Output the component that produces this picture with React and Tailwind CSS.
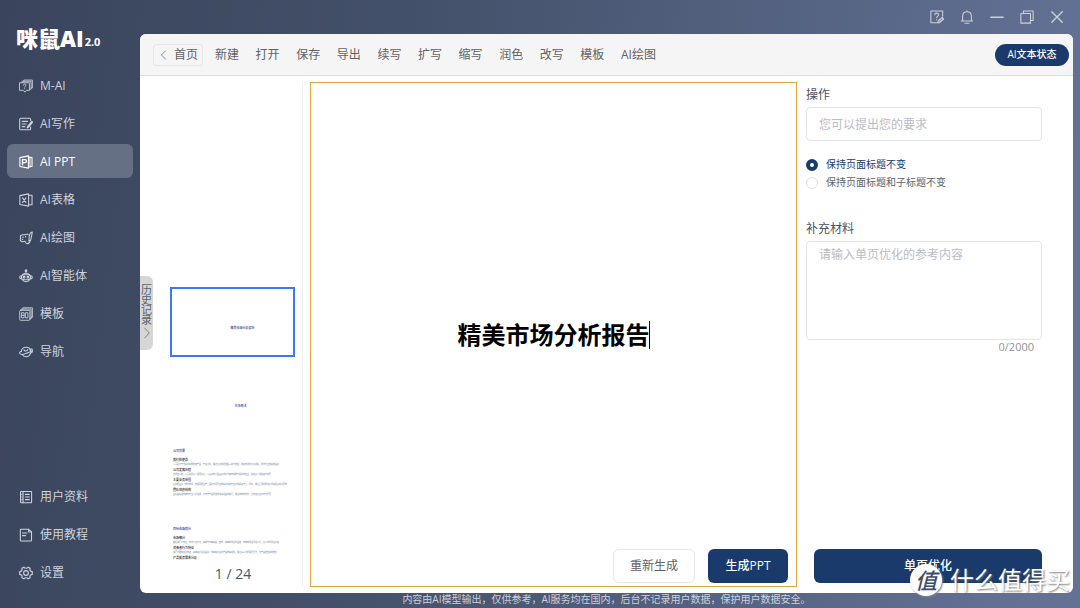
import React from "react";

function Icon({ children, className = "size-4", width = 1 }) {
  return (
    <svg
      viewBox="0 0 16 16"
      className={`shrink-0 ${className}`}
      fill="none"
      stroke="currentColor"
      strokeWidth={width}
      strokeLinecap="round"
      strokeLinejoin="round"
      aria-hidden="true"
    >
      {children}
    </svg>
  );
}

const nav = "size-3.5";

const icons = {
  chat: (
    <Icon className={nav}>
      <path d="M3.500 4V2.600h10.300v9h-1.700" />
      <path d="M5.500 2.600V1.200h9.800v9h-1.500" />
      <path d="M1 4.300h10.900v8.700H8.400l-1.600 2-1.600-2H1z" />
      <path d="M5 7.200c0-2 3-2 3 0 0 1-1.500 1-1.500 2.200M6.500 11v.2" />
    </Icon>
  ),
  write: (
    <Icon className={nav} width={1.200}>
      <path d="M13.300 4V2.800c0-.8-.5-1.300-1.300-1.300H2.200C1.400 1.500.8 2 .8 2.800v10.500c0 .8.600 1.300 1.400 1.300H12c.8 0 1.300-.5 1.300-1.300V11.500" />
      <path d="M3.600 5h6.200M3.600 8h4.600M3.600 11h3.200" />
      <path d="M14.600 5 9.900 10.800l-.6 1.700 1.700-.9 4.600-5.800z" fill="currentColor" />
    </Icon>
  ),
  ppt: (
    <Icon className={nav} width={1.200}>
      <path d="M1 3 10.800 1v14L1 13.100z" />
      <path d="M10.800 2.200h1.700v11.600h-1.700M12.500 2.800h2.400v10.400h-2.400" />
      <path d="M4 11.200V5.300h2.800c2.400 0 2.400 3.400 0 3.400H4" strokeWidth="1.500" />
    </Icon>
  ),
  sheet: (
    <Icon className={nav} width={1.200}>
      <path d="M1 3 11 1v14L1 13.100z" />
      <path d="M11 2.600h3.900v10.800H11" />
      <path d="m4 5.500 4 5.200M8 5.500l-4 5.200" />
    </Icon>
  ),
  paint: (
    <Icon className={nav} width={1.200}>
      <path d="M10.700 4.300C9.500 2.800 7.500 4.100 6 4.400c-2-.6-4.500.4-4.500 2 0 .9.600 1.200.4 2-1 1-.6 3.600 1.900 3.800 1.700.2 1.900-.7 3-.5.900.3.500 2.900 2.700 2.800 2-.2 3-2 3.300-3.800" />
      <path d="M15.200 1.200c-2 .5-3.300 2.600-3.500 5.400l-.4 4.800c1.600-.2 2.400-1.400 2.500-2.900z" />
      <path d="M4.500 7.200h.1M7.500 6.500h.1M4 9.700h.1" strokeWidth="1.600" />
    </Icon>
  ),
  robot: (
    <Icon className={nav} width={1.200}>
      <circle cx="8" cy="2" r="1" />
      <path d="M8 3.200v1.600M4 6.500c.8-1.200 2.300-1.700 4-1.700s3.200.5 4 1.700" />
      <rect x="2.800" y="6.600" width="10.400" height="5.600" rx="2.800" />
      <path d="M2.600 7.700c-2.400 0-2.400 3.600 0 3.600M13.400 7.700c2.400 0 2.400 3.600 0 3.600M3.800 12.400c1.700 2.800 6.700 2.800 8.400 0" />
      <circle cx="5.800" cy="9.400" r="1" />
      <circle cx="10.200" cy="9.400" r="1" />
    </Icon>
  ),
  template: (
    <Icon className={nav}>
      <rect x=".8" y="3.800" width="11.600" height="11.400" rx="1" />
      <path d="M2.600 3.800V2.400h11.200v11.200h-1.400M4.400 2.400V.9h10.900v11h-1.500" />
      <path d="M3.200 6.600h2.600v5.800H3.200zM3.200 9.500h2.600M7.700 6.600h2.500v5.800H7.700z" />
    </Icon>
  ),
  compass: (
    <Icon className={nav} width={1.200}>
      <path d="M2.800 7.300C2.900 4.700 5.200 2.600 8 2.600s5 1.900 5.200 4.400M13.100 9.300c-.6 2.500-2.700 4.100-5.100 4.100-1.900 0-3.500-.9-4.400-2.500" />
      <path d="M2.800 7C1.200 7.600.4 8.500.8 9.500c1.100 1.900 5.300 1.200 8.700-.3 3.500-1.500 6.500-2.500 5.700-4-.4-.6-1.400-.6-2.600-.3M13.100 9.300c1.800-.6 2.600-1.500 2.100-2.400" />
      <path d="M5.700 5.500c.3 1.900 3.700 2 4.300-.2" />
    </Icon>
  ),
  profile: (
    <Icon className={nav} width={1.200}>
      <rect x="1.800" y="1.600" width="12.600" height="13" rx=".5" />
      <path d="M4.600 1.600v13M7.300 5h4.400M7.300 8h4.400M7.300 11h4.400" />
      <path d="M2 5h2M2 8h2M2 11h2" opacity=".6" />
    </Icon>
  ),
  guide: (
    <Icon className={nav} width={1.200}>
      <path d="M11 1.500H2.300c-.5 0-.8.300-.8.800v11.700c0 .5.300.8.800.8h11.200c.5 0 .8-.3.800-.8V4.500z" />
      <path d="M11 1.500v3h3.300M4 5.700h5M4 8.700h3.500" />
    </Icon>
  ),
  gear: (
    <Icon className={nav} width={1.300}>
      <path d="M5.600 1.300c.7 1 1.500 1.300 2.400 1.300s1.700-.3 2.400-1.300l2.300 1.300c-.4 1.200-.4 2 .1 2.700s1.100 1.100 2.400 1.200v3c-1.300.1-1.900.5-2.400 1.200s-.5 1.500-.1 2.700l-2.300 1.300c-.7-1-1.500-1.300-2.400-1.300s-1.700.3-2.400 1.300l-2.300-1.300c.4-1.200.4-2-.1-2.700S2.100 9.600.8 9.500v-3c1.300-.1 1.900-.5 2.400-1.200s.5-1.500.1-2.700z" />
      <circle cx="8" cy="8" r="2.700" />
    </Icon>
  ),
};

const mainNav = [
  ["M-AI", "chat"],
  ["AI写作", "write"],
  ["AI PPT", "ppt"],
  ["AI表格", "sheet"],
  ["AI绘图", "paint"],
  ["AI智能体", "robot"],
  ["模板", "template"],
  ["导航", "compass"],
];

const footNav = [
  ["用户资料", "profile"],
  ["使用教程", "guide"],
  ["设置", "gear"],
];

const tools = ["新建", "打开", "保存", "导出", "续写", "扩写", "缩写", "润色", "改写", "模板", "AI绘图"];

const slides = [
  {
    title: "公司背景",
    items: [
      ["我们的使命", "公司致力于为客户提供优质产品，专注创新，通过持续的研发投入提升体验，并在市场中保持领先，成为行业信赖的品牌"],
      ["公司发展历程", "自成立以来，公司经历多个发展阶段，从最初的小型团队成长为拥有完整产品线的企业，并在多个领域取得成果"],
      ["主要业务范围", "业务覆盖多个细分市场，包括研发生产，面向不同行业的客户提供专业化的解决方案，同时，通过灵活的服务模式满足多样化需求"],
      ["团队组织结构", "团队由经验丰富的专业人员组成，分布于产品研发市场和运营等部门，通过高效的协作，保障各项业务有序开展"],
    ],
  },
  {
    title: "目标市场划分",
    items: [
      ["市场细分", "根据消费者特征，市场可划分为，高端与中端两类，其中，高端市场注重品质，中端市场注重性价比，大众市场关注价格"],
      ["消费者行为特征", "消费者更加注重体验，高端用户关注品牌，中端用户注重产品的实用性，通过深入分析消费行为，为产品定位提供支持"],
      ["产品服务需求分析", ""],
    ],
  },
];

function NavItem({ label, icon, active }) {
  return (
    <button
      type="button"
      className={`flex h-[34px] w-full items-center gap-[7px] rounded-md pl-3 pt-px text-xs ${
        active ? "bg-[#667084] text-white" : "text-[#ced3dd]"
      }`}
    >
      {icons[icon]}
      <span>{label}</span>
    </button>
  );
}

function Sidebar() {
  return (
    <aside className="flex w-[140px] shrink-0 flex-col px-[7px] pb-[19px] pt-6">
      <div className="flex h-11 items-start pl-[9px] leading-7 text-white">
        <span className="text-[22px] font-black">咪鼠AI</span>
        <span className="pl-px pt-1 text-[11px] font-bold">2.0</span>
      </div>
      <nav className="flex flex-1 flex-col gap-1">
        {mainNav.map(([label, icon]) => (
          <NavItem key={label} label={label} icon={icon} active={label === "AI PPT"} />
        ))}
      </nav>
      <nav className="flex flex-col gap-1">
        {footNav.map(([label, icon]) => (
          <NavItem key={label} label={label} icon={icon} />
        ))}
      </nav>
    </aside>
  );
}

function TitleBar() {
  return (
    <header className="flex h-[34px] shrink-0 items-center justify-end gap-4 pr-[9px] text-[#cfd1d6]">
      <button type="button" aria-label="反馈">
        <Icon className={nav} width={1.200}>
          <path d="M14.500 7V1.200H1v13.300h6.500" />
          <path d="M5.500 5.300c.1-2.300 4.300-2.300 4.300.1 0 1.500-2.100 1.700-2.100 3.400M7.700 11v.2" />
          <path d="m9.300 12.500 4.600-4 1.800 1.800-4.700 4.200-2.200.4z" fill="currentColor" fillOpacity=".5" />
        </Icon>
      </button>
      <button type="button" aria-label="通知">
        <Icon className={nav} width={1.200}>
          <path d="M1.500 12.500h13M3 12.500V7.300c0-3 2-5.200 5-5.200s5 2.200 5 5.200v5.200M8 .8v1.300M5.700 15.200h4.600" />
        </Icon>
      </button>
      <button type="button" aria-label="最小化">
        <Icon className={nav} width={1.600}>
          <path d="M1 8.300h14" />
        </Icon>
      </button>
      <button type="button" aria-label="还原">
        <Icon className={nav} width={1.200}>
          <rect x="1" y="4" width="11" height="11" />
          <path d="M4 4V1.200h11V12h-3" />
        </Icon>
      </button>
      <button type="button" aria-label="关闭">
        <Icon className={nav} width={1.600}>
          <path d="M2 2l12 12M14 2 2 14" />
        </Icon>
      </button>
    </header>
  );
}

function Toolbar() {
  return (
    <div className="flex h-[42px] shrink-0 items-center border-b border-[#dedede] bg-[#f5f5f5] pl-[13px] pr-1 text-xs text-[#606266]">
      <button type="button" className="flex h-[22px] items-center gap-1 rounded-[3px] border border-[#e6e6e6] pl-1 pr-1">
        <Icon className="size-3">
          <path d="M10 2.500 4.500 8l5.500 5.500" />
        </Icon>
        首页
      </button>
      <div className="ml-3 flex w-[441px] justify-between">
        {tools.map((t) => (
          <button key={t} type="button">
            {t}
          </button>
        ))}
      </div>
      <button type="button" className="ml-auto h-[22px] w-[74px] rounded-full bg-[#1a3a6b] text-[10px] font-medium text-white">
        AI文本状态
      </button>
    </div>
  );
}

const slideBox = "h-[70px] shrink-0 overflow-hidden";

function SlideList() {
  return (
    <section className="relative mr-[7px] flex w-[163px] shrink-0 flex-col border-r border-[#f0f0f0]">
      <div className="flex min-h-0 flex-1 flex-col gap-2 overflow-hidden pl-[30px] pr-[7px] pt-[205px]">
        <div className={`${slideBox} flex items-center justify-center border-2 border-[#3b78f5] pl-5 pt-3`}>
          <span className="text-[3px] font-medium leading-[4px] text-[#26336b]">精美市场分析报告</span>
        </div>
        <div className={`${slideBox} flex items-center justify-center pl-4 pt-3`}>
          <span className="text-[3px] leading-[4px] text-[#1c2f96]">市场概述</span>
        </div>
        {slides.map((s) => (
          <div key={s.title} className={`${slideBox} pl-[3px] pt-1.5`}>
            <p className="text-[3px] font-medium leading-[4px] text-[#1c2f96]">{s.title}</p>
            <div className="pt-[5px]">
              {s.items.map(([h, body]) => (
                <div key={h} className="whitespace-nowrap pb-px leading-[5px]">
                  <p className="text-[3px] font-medium text-[#222]">{h}</p>
                  <p className="text-[2px] leading-[4px] text-[#777]">{body}</p>
                </div>
              ))}
            </div>
          </div>
        ))}
      </div>
      <p className="shrink-0 pb-[3px] pl-6 pt-0.5 text-center text-sm text-[#4b5563]">1 / 24</p>
      <button
        type="button"
        className="absolute left-0 top-[194px] flex h-[74px] w-[13px] flex-col items-center rounded-r-md bg-[#d6d6d6] pt-[9px] text-[#5d646f]"
      >
        <span className="w-[11px] break-all text-[11px] leading-[10px]">历史记录</span>
        <Icon className="mt-0.5 size-3">
          <path d="m5 1.500 6 6.500-6 6.500" />
        </Icon>
      </button>
    </section>
  );
}

function Editor() {
  return (
    <section className="grid min-w-0 flex-1 grid-rows-[1fr_auto_1fr] border border-[#e2a53a]">
      <div />
      <h1 className="flex items-center justify-center text-2xl font-bold leading-8 text-black">
        精美市场分析报告
        <span className="-ml-px h-7 w-px bg-black" />
      </h1>
      <div className="flex items-end justify-end gap-[13px] pb-[3px] pr-2 text-xs">
        <button type="button" className="h-[34px] w-[82px] rounded-md border border-[#e4e6ee] text-[#606266]">
          重新生成
        </button>
        <button type="button" className="h-[34px] w-20 rounded-md bg-[#1a3a6b] font-medium text-white">
          生成PPT
        </button>
      </div>
    </section>
  );
}

function Radio({ id, label, on }) {
  return (
    <div className="flex h-[18px] items-center gap-2">
      <input
        id={id}
        type="radio"
        name="keep"
        defaultChecked={on}
        className="size-3 appearance-none rounded-full border border-[#dcdfe6] bg-white checked:border-4 checked:border-[#1a3a6b]"
      />
      <label htmlFor={id} className={`text-[10px] ${on ? "text-[#1a3a6b]" : "text-[#606266]"}`}>
        {label}
      </label>
    </div>
  );
}

function OptionsPanel() {
  return (
    <section className="flex w-[276px] shrink-0 flex-col pb-1 pl-[9px] pr-[31px] text-xs text-[#4a5260]">
      <label htmlFor="request" className="pb-1 pt-[5px]">
        操作
      </label>
      <input
        id="request"
        type="text"
        placeholder="您可以提出您的要求"
        className="h-[34px] w-full rounded border border-[#e2e4ec] px-3 outline-none placeholder:text-[#b8bcc5]"
      />
      <div className="pt-[15px]">
        <Radio id="keep-title" label="保持页面标题不变" on />
        <Radio id="keep-both" label="保持页面标题和子标题不变" />
      </div>
      <label htmlFor="material" className="pb-1 pt-[29px]">
        补充材料
      </label>
      <textarea
        id="material"
        placeholder="请输入单页优化的参考内容"
        className="block h-[99px] w-full resize-none rounded border border-[#e2e4ec] px-3 py-[5px] outline-none placeholder:text-[#b8bcc5]"
      />
      <p className="pr-2 text-right text-[11px] leading-[14px] text-[#909399]">0/2000</p>
      <button type="button" className="ml-2 mt-auto h-[34px] rounded-md bg-[#1a3a6b] font-medium text-white">
        单页优化
      </button>
    </section>
  );
}

function Watermark() {
  return (
    <div className="pointer-events-none absolute bottom-3 right-2.5 flex items-center gap-2 text-white">
      <span className="flex size-8 items-center justify-center rounded-full bg-white text-[22px] font-medium italic leading-8 text-[#3c4d6c] shadow-[1px_1px_2px_#888]">
        值
      </span>
      <span className="text-2xl leading-8 [text-shadow:1px_1px_2px_#777]">什么值得买</span>
    </div>
  );
}

export default function App() {
  return (
    <div className="relative flex h-screen overflow-hidden bg-[linear-gradient(97deg,#3a455d_0%,#435069_35%,#637195_95%)] font-['Open_Sans','Noto_Sans_CJK_SC',sans-serif]">
      <Sidebar />
      <div className="flex min-w-0 flex-1 flex-col pr-[7px]">
        <TitleBar />
        <main className="flex min-h-0 flex-1 flex-col overflow-hidden rounded-md bg-white">
          <Toolbar />
          <div className="flex min-h-0 flex-1 py-1.5">
            <SlideList />
            <Editor />
            <OptionsPanel />
          </div>
        </main>
        <footer className="h-[15px] shrink-0 text-center text-[10px] leading-[13px] text-[#cbd0db]">
          内容由AI模型输出，仅供参考，AI服务均在国内，后台不记录用户数据，保护用户数据安全。
        </footer>
      </div>
      <Watermark />
    </div>
  );
}
